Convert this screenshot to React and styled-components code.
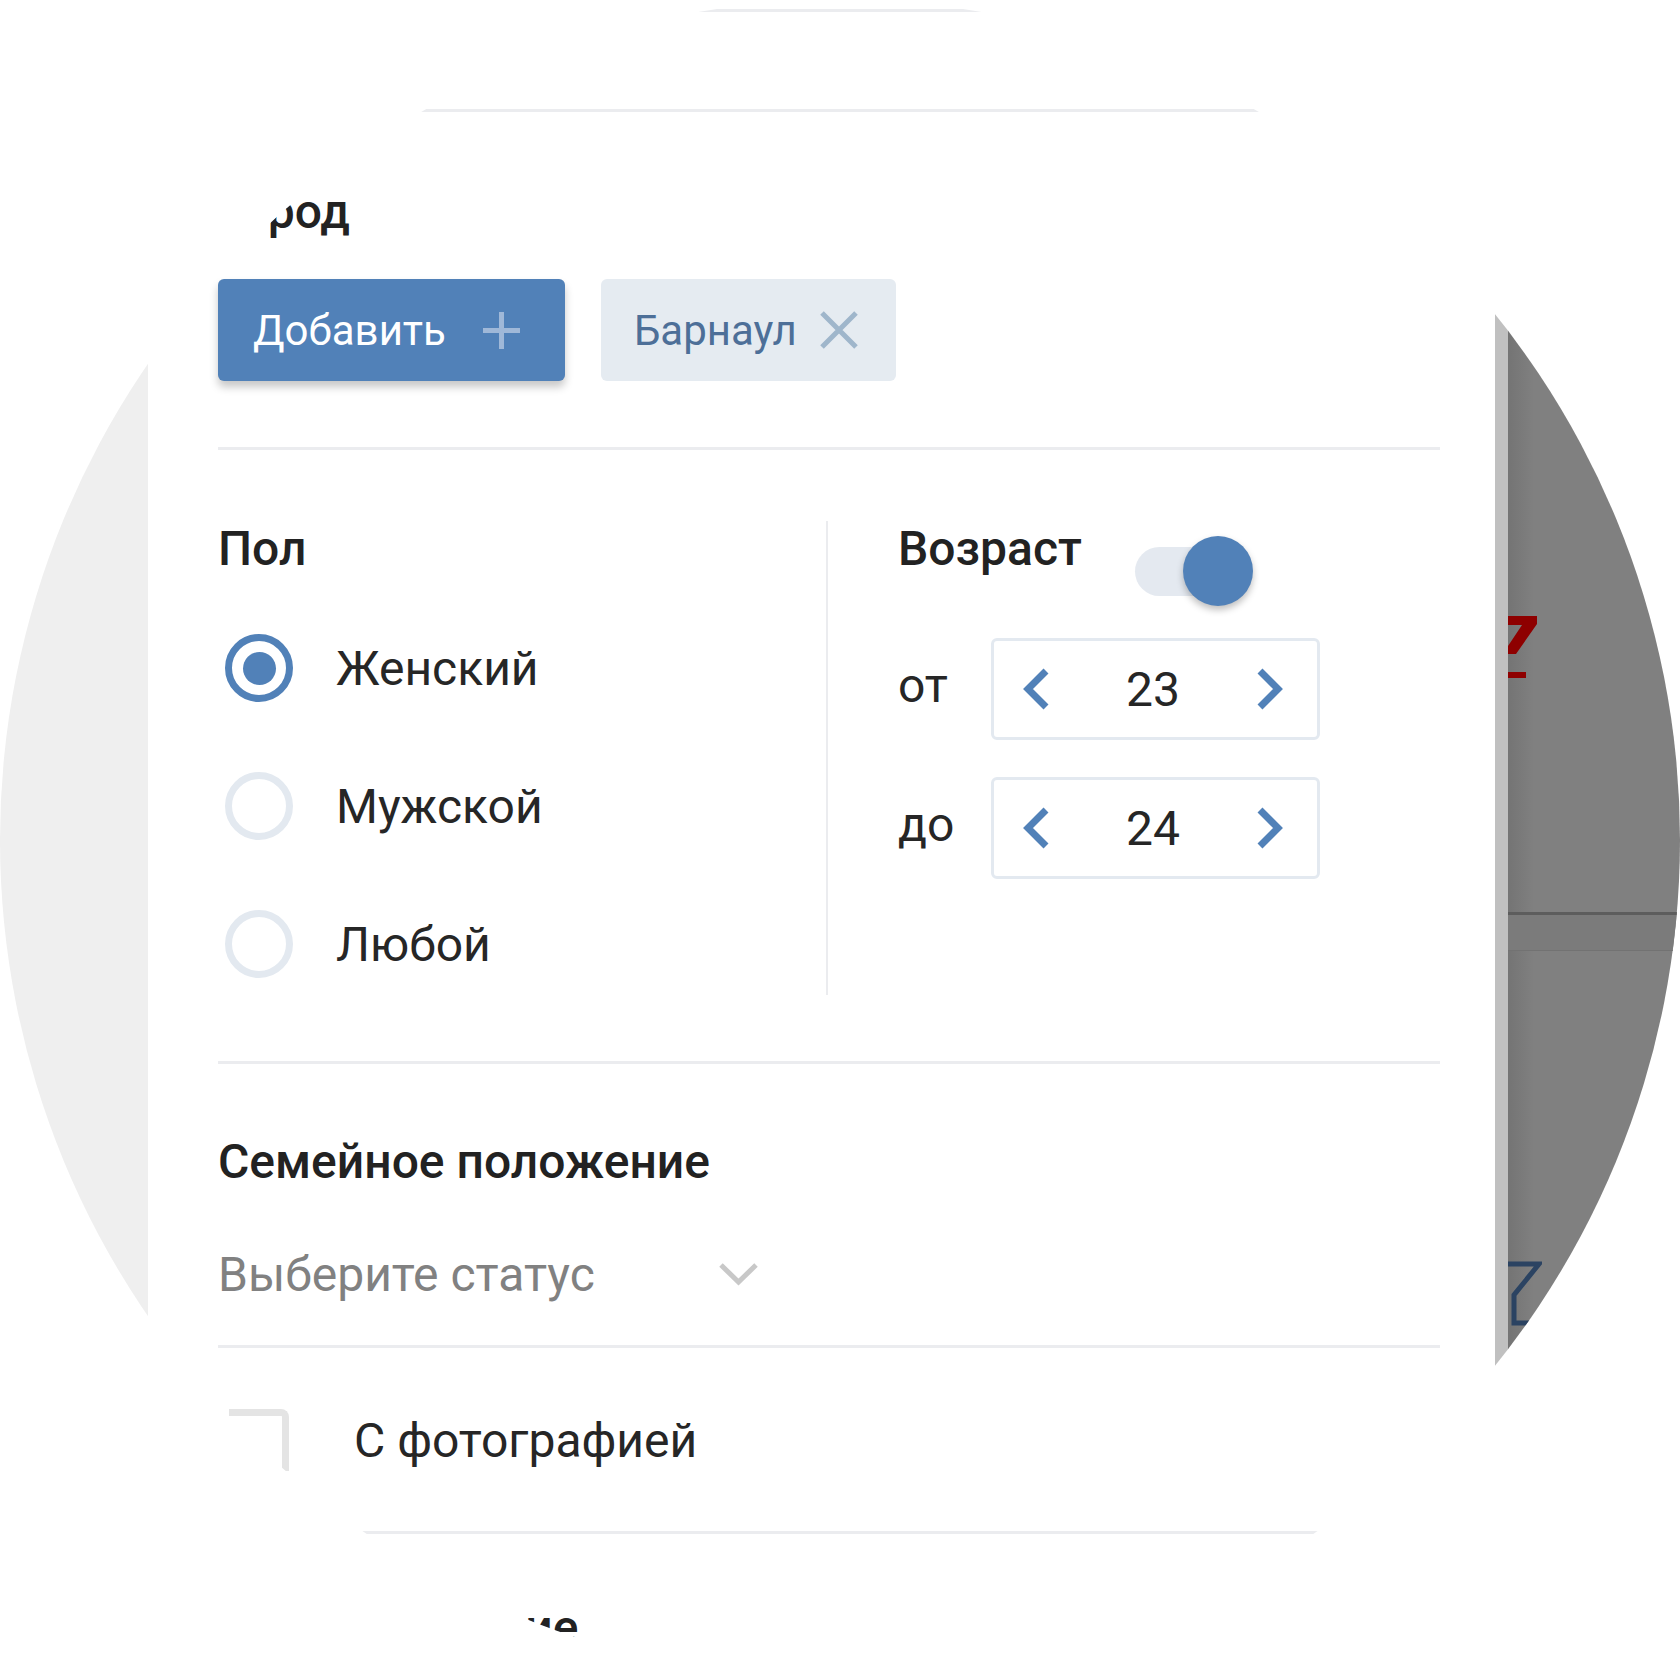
import React from 'react';
import styled, { createGlobalStyle } from 'styled-components';

const GlobalStyle = createGlobalStyle`
  html, body { margin: 0; padding: 0; background: #fff; }
  body { font-family: Roboto, 'Noto Sans', sans-serif; color: #262626; }
`;

const BLUE = '#5181b8';

const Stage = styled.div`
  width: 1680px;
  height: 1680px;
  background: #fff;
`;

const Lens = styled.div`
  width: 1680px;
  height: 1680px;
  border-radius: 50%;
  overflow: hidden;
  display: flex;
`;

const Gutter = styled.div`
  width: 148px;
  flex: none;
  background: #efefef;
`;

const Panel = styled.div`
  width: 1347px;
  flex: none;
  box-sizing: border-box;
  background: #fff;
  padding: 9px 55px 0 70px;
  display: flex;
  flex-direction: column;
`;

const PanelEdge = styled.div`
  width: 13px;
  flex: none;
  background: #c0c0c0;
`;

const Backdrop = styled.div`
  flex: 1;
  background: linear-gradient(to right, #747474 0, #808080 26px);
  display: flex;
  flex-direction: column;
`;

const Mark = styled.svg`
  display: block;
  flex: none;
  margin-top: ${p => p.$mt}px;
`;

const PageBar = styled.div`
  margin-top: 234px;
  height: 35px;
  border-top: 3px solid #5d5d5d;
  border-bottom: 1px solid #727272;
  background: #7b7b7b;
`;

const Rule = styled.div`
  height: 3px;
  flex: none;
  background: #ebecef;
  margin-top: ${p => p.$mt || 0}px;
`;

const Section = styled.section`
  padding-top: ${p => p.$pt}px;
  padding-bottom: ${p => p.$pb || 0}px;
`;

const Heading = styled.h2`
  margin: 0;
  font-size: 48px;
  line-height: 56px;
  font-weight: 500;
  color: #222;
  white-space: nowrap;
`;

const ChipRow = styled.div`
  display: flex;
  gap: 36px;
  margin-top: 39px;
`;

const Chip = styled.button`
  height: 102px;
  box-sizing: border-box;
  border: 0;
  border-radius: 6px;
  display: flex;
  align-items: center;
  font-family: inherit;
  font-size: 42px;
  padding: 0 ${p => p.$pr}px 0 ${p => p.$pl}px;
  gap: ${p => p.$gap}px;
  background: ${p => (p.$primary ? BLUE : '#e5ebf1')};
  color: ${p => (p.$primary ? '#fff' : '#4d6f98')};
  box-shadow: ${p => (p.$primary ? '0 6px 8px rgba(0,0,0,0.22)' : 'none')};
`;

const Columns = styled.div`
  display: flex;
`;

const LeftCol = styled.div`
  width: 608px;
  flex: none;
`;

const VDivider = styled.div`
  width: 2px;
  flex: none;
  background: #ebecef;
`;

const RightCol = styled.div`
  flex: 1;
  padding-left: 70px;
`;

const RadioList = styled.div`
  margin-top: 40px;
  display: flex;
  flex-direction: column;
  gap: 36px;
`;

const RadioRow = styled.label`
  height: 102px;
  display: flex;
  align-items: center;
  font-size: 48px;
  color: #262626;
`;

const Radio = styled.span`
  width: 68px;
  height: 68px;
  box-sizing: border-box;
  margin: 0 43px 0 7px;
  border-radius: 50%;
  border: 7px solid ${p => (p.$checked ? BLUE : '#e3e9f0')};
  display: flex;
  align-items: center;
  justify-content: center;
  &::after {
    content: '';
    width: 33px;
    height: 33px;
    border-radius: 50%;
    background: ${p => (p.$checked ? BLUE : 'transparent')};
  }
`;

const AgeHeader = styled.div`
  display: flex;
  align-items: flex-start;
`;

const Switch = styled.div`
  position: relative;
  width: 110px;
  height: 49px;
  margin: 26px 0 0 53px;
  border-radius: 25px;
  background: #e4e9f0;
`;

const Knob = styled.span`
  position: absolute;
  left: 48px;
  top: -11px;
  width: 70px;
  height: 70px;
  border-radius: 50%;
  background: ${BLUE};
  box-shadow: 0 4px 7px rgba(0,0,0,0.25);
`;

const Steppers = styled.div`
  margin-top: 42px;
  display: flex;
  flex-direction: column;
  gap: 37px;
`;

const StepperRow = styled.div`
  display: flex;
  align-items: center;
  font-size: 48px;
`;

const StepLabel = styled.span`
  width: 93px;
  margin-top: -8px;
  color: #262626;
`;

const StepBox = styled.div`
  width: 329px;
  height: 102px;
  box-sizing: border-box;
  border: 3px solid #e3e9f0;
  border-radius: 6px;
  display: flex;
  align-items: center;
  justify-content: space-between;
  padding: 0 33px 0 28px;
  color: #262626;
`;

const SelectField = styled.div`
  width: 541px;
  height: 56px;
  margin-top: 56px;
  display: flex;
  align-items: center;
  justify-content: space-between;
  font-size: 48px;
  color: #818181;
`;

const CheckRow = styled.label`
  height: 62px;
  display: flex;
  align-items: center;
  font-size: 48px;
  color: #262626;
`;

const CheckBox = styled.span`
  width: 60px;
  height: 62px;
  box-sizing: border-box;
  margin: 0 65px 0 11px;
  border-top: 7px solid #e4e4e4;
  border-right: 7px solid #e4e4e4;
  border-top-right-radius: 8px;
`;

const Chevron = ({ dir }) => (
  <svg width="28" height="42" viewBox="0 0 28 42">
    <polyline
      points={dir === 'left' ? '24,3 6,21 24,39' : '4,3 22,21 4,39'}
      fill="none"
      stroke={BLUE}
      strokeWidth="7"
    />
  </svg>
);

const Stepper = ({ label, value }) => (
  <StepperRow>
    <StepLabel>{label}</StepLabel>
    <StepBox>
      <Chevron dir="left" />
      <span>{value}</span>
      <Chevron dir="right" />
    </StepBox>
  </StepperRow>
);

const genders = [
  { label: 'Женский', checked: true },
  { label: 'Мужской' },
  { label: 'Любой' },
];

export default function App() {
  return (
    <Stage>
      <GlobalStyle />
      <Lens>
        <Gutter />
        <Panel>
          <Rule />
          <Rule $mt={97} />

          <Section $pt={72} $pb={66}>
            <Heading>Город</Heading>
            <ChipRow>
              <Chip $primary $pl={35} $pr={43} $gap={35}>
                Добавить
                <svg width="41" height="41" viewBox="0 0 41 41">
                  <path d="M20.5 2v37M2 20.5h37" stroke="#9fb8d8" strokeWidth="5" />
                </svg>
              </Chip>
              <Chip $pl={33} $pr={37} $gap={22}>
                Барнаул
                <svg width="40" height="40" viewBox="0 0 40 40">
                  <path d="M3 3l34 34M37 3L3 37" stroke="#9fb6cb" strokeWidth="5" />
                </svg>
              </Chip>
            </ChipRow>
          </Section>
          <Rule />

          <Section $pt={71} $pb={66}>
            <Columns>
              <LeftCol>
                <Heading>Пол</Heading>
                <RadioList>
                  {genders.map(g => (
                    <RadioRow key={g.label}>
                      <Radio $checked={g.checked} />
                      {g.label}
                    </RadioRow>
                  ))}
                </RadioList>
              </LeftCol>
              <VDivider />
              <RightCol>
                <AgeHeader>
                  <Heading>Возраст</Heading>
                  <Switch>
                    <Knob />
                  </Switch>
                </AgeHeader>
                <Steppers>
                  <Stepper label="от" value="23" />
                  <Stepper label="до" value="24" />
                </Steppers>
              </RightCol>
            </Columns>
          </Section>
          <Rule />

          <Section $pt={70} $pb={43}>
            <Heading>Семейное положение</Heading>
            <SelectField>
              Выберите статус
              <svg width="41" height="24" viewBox="0 0 41 24">
                <polyline points="3,3 20.5,20 38,3" fill="none" stroke="#c8c8c8" strokeWidth="5" />
              </svg>
            </SelectField>
          </Section>
          <Rule />

          <Section $pt={61} $pb={60}>
            <CheckRow>
              <CheckBox />
              С фотографией
            </CheckRow>
          </Section>
          <Rule />

          <Section $pt={66}>
            <Heading>Мировоззрение</Heading>
          </Section>
        </Panel>
        <PanelEdge />
        <Backdrop>
          <Mark $mt={616} width="32" height="62" viewBox="0 0 32 62">
            <polygon points="0,0 29,0 29,8 8,38 0,38 0,30 14,9 0,9" fill="#8e0000" />
            <rect x="0" y="56" width="18" height="6" fill="#8e0000" />
          </Mark>
          <PageBar />
          <Mark $mt={310} width="34" height="66" viewBox="0 0 34 66">
            <path d="M0 3H31L6 34V62H24" fill="none" stroke="#2b4362" strokeWidth="5" />
          </Mark>
        </Backdrop>
      </Lens>
    </Stage>
  );
}
